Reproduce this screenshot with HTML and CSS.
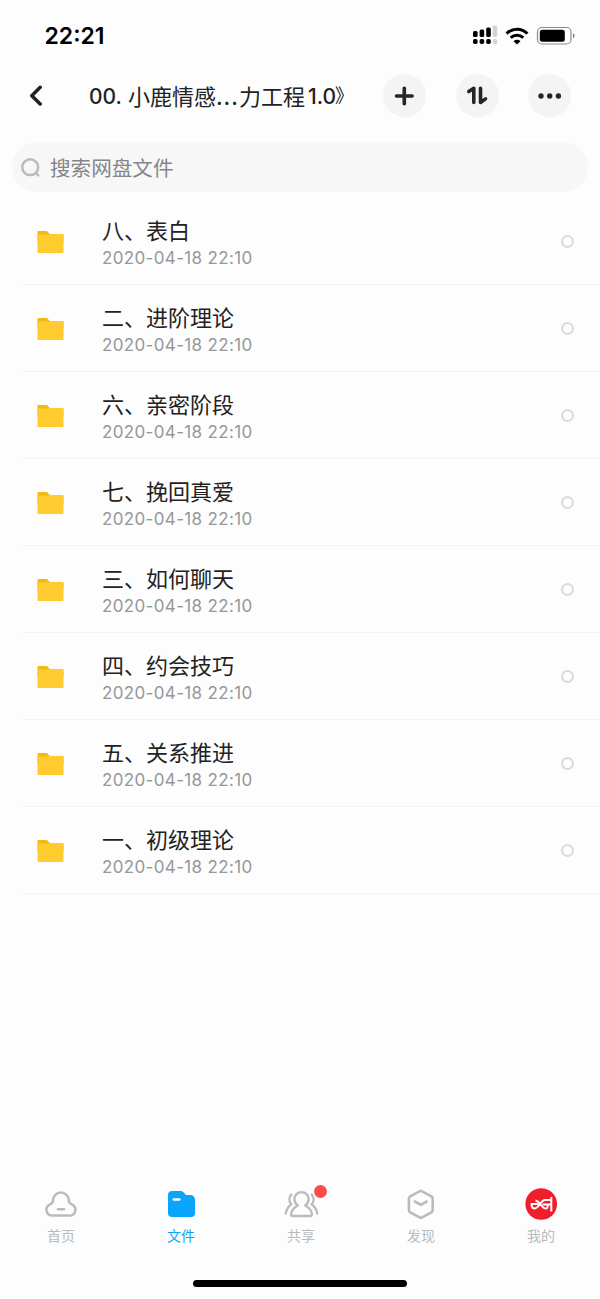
FILE: index.html
```html
<!DOCTYPE html>
<html lang="zh-CN">
<head>
<meta charset="utf-8">
<title>文件</title>
<link rel="stylesheet" href="styles.css">
</head>
<body>
<svg width="0" height="0" class="defs">
  <symbol id="folder" viewBox="0 0 27 24">
    <path d="M1.5 1H10l3 3.2h12.500a1 1 0 0 1 1 1V12H.5V2a1 1 0 0 1 1-1z" fill="#f3b911"/>
    <path d="M.5 4.600H11l1.300-.4h13.200a1 1 0 0 1 1 1V22.300a.8.8 0 0 1-.8.8H1.300a.8.8 0 0 1-.8-.8z" fill="#ffcb2e"/>
  </symbol>
</svg>
<div class="screen">
  <div class="status">
    <span class="clock">22:21</span>
    <svg class="status-icons" width="104" height="20" viewBox="472 26 104 20">
      <g fill="#000">
        <rect x="473" y="31" width="4.600" height="6" rx="1.500"/><rect x="479.600" y="29.500" width="4.600" height="7.500" rx="1.500"/><rect x="486.200" y="27.500" width="4.600" height="9.500" rx="1.500"/>
        <rect x="473" y="39" width="4.600" height="5" rx="1.800"/><rect x="479.600" y="39" width="4.600" height="5" rx="1.800"/><rect x="486.200" y="39" width="4.600" height="5" rx="1.800"/>
      </g>
      <g fill="#d3d3d3"><rect x="492.800" y="25.500" width="4.400" height="11.500" rx="1.500"/><rect x="492.800" y="39" width="4.400" height="5" rx="1.800"/></g>
      <g fill="none" stroke="#000" stroke-width="3">
        <path d="M506.600 33.600a14.800 14.800 0 0 1 20.800 0"/><path d="M510.700 37.700a9 9 0 0 1 12.600 0"/>
      </g>
      <path d="M513.500 41.200a5 5 0 0 1 7 0L517 44.400z" fill="#000"/>
      <rect x="537.500" y="27.500" width="33.500" height="16.500" rx="4.500" fill="#fff" stroke="#8a8a8a" stroke-width="1.200"/>
      <rect x="539.800" y="29.800" width="25" height="12" rx="2.500" fill="#000"/>
      <path d="M573 33.300a2.800 2.800 0 0 1 0 5z" fill="#777"/>
    </svg>
  </div>
  <header class="header">
    <svg class="back" width="16" height="22" viewBox="28 85 16 22"><path d="M40.200 87.300L31.800 95.700l8.400 8.300" fill="none" stroke="#222" stroke-width="3.500" stroke-linecap="round" stroke-linejoin="round"/></svg>
    <h1 class="title"><span class="num">00.</span><span class="cjk lead">小鹿情感</span><span class="dots">...</span><span class="cjk">力工程</span><span class="num version">1.0</span><span class="cjk close">》</span></h1>
    <div class="actions">
      <span class="round"><svg width="43" height="43" viewBox="383 74 43 43"><path d="M404.300 88.200v15.600M396.500 96h15.600" stroke="#262626" stroke-width="3.600" stroke-linecap="round"/></svg></span>
      <span class="round"><svg width="43" height="43" viewBox="456 74 43 43"><path d="M468.800 91.600l5-3.300V102.500M480.500 88.300V102.500l5-3.600" fill="none" stroke="#262626" stroke-width="3.600" stroke-linecap="round" stroke-linejoin="round"/></svg></span>
      <span class="round"><svg width="43" height="43" viewBox="528 74 43 43"><g fill="#262626"><circle cx="541" cy="96" r="2.700"/><circle cx="549.700" cy="96" r="2.700"/><circle cx="558.400" cy="96" r="2.700"/></g></svg></span>
    </div>
  </header>
  <div class="search">
    <svg width="20" height="20" viewBox="21 157 20 20"><g fill="none" stroke="#bbb" stroke-width="2.500" stroke-linecap="round"><circle cx="30.200" cy="167.200" r="7.900"/><path d="M36 173.200l2.300 2.200"/></g></svg>
    <span class="placeholder">搜索网盘文件</span>
  </div>
  <main class="list">
    <div class="row"><svg class="folder"><use href="#folder"/></svg><div class="info"><div class="name">八、表白</div><div class="date">2020-04-18 22:10</div></div><i class="check"></i></div>
    <div class="row"><svg class="folder"><use href="#folder"/></svg><div class="info"><div class="name">二、进阶理论</div><div class="date">2020-04-18 22:10</div></div><i class="check"></i></div>
    <div class="row"><svg class="folder"><use href="#folder"/></svg><div class="info"><div class="name">六、亲密阶段</div><div class="date">2020-04-18 22:10</div></div><i class="check"></i></div>
    <div class="row"><svg class="folder"><use href="#folder"/></svg><div class="info"><div class="name">七、挽回真爱</div><div class="date">2020-04-18 22:10</div></div><i class="check"></i></div>
    <div class="row"><svg class="folder"><use href="#folder"/></svg><div class="info"><div class="name">三、如何聊天</div><div class="date">2020-04-18 22:10</div></div><i class="check"></i></div>
    <div class="row"><svg class="folder"><use href="#folder"/></svg><div class="info"><div class="name">四、约会技巧</div><div class="date">2020-04-18 22:10</div></div><i class="check"></i></div>
    <div class="row"><svg class="folder"><use href="#folder"/></svg><div class="info"><div class="name">五、关系推进</div><div class="date">2020-04-18 22:10</div></div><i class="check"></i></div>
    <div class="row"><svg class="folder"><use href="#folder"/></svg><div class="info"><div class="name">一、初级理论</div><div class="date">2020-04-18 22:10</div></div><i class="check"></i></div>
  </main>
  <nav class="tabs">
    <div class="tab">
      <svg width="36" height="36" viewBox="43 1186 36 36"><g fill="none" stroke="#b9bbbe" stroke-width="2.500" stroke-linecap="round"><path d="M52.500 1215.600h17a5.900 5.900 0 0 0 2.300-11.300c-2-.8-3-1.500-3-3.800a7.900 7.900 0 0 0-15.800 0c0 2.300-1 3-3 3.800a5.900 5.900 0 0 0 2.500 11.300z"/><path d="M58 1209.300h6"/></g></svg>
      <span>首页</span>
    </div>
    <div class="tab active">
      <svg width="36" height="36" viewBox="163 1186 36 36"><path d="M172 1191h8.500c1.500 0 2.500.6 3.500 1.800l1.200 1.400c.6.700 1.200.9 2 .9h3.300a4.500 4.500 0 0 1 4.500 4.500V1213a4 4 0 0 1-4 4h-19a4 4 0 0 1-4-4v-18a4 4 0 0 1 4-4z" fill="#0aa4fb"/><path d="M173.800 1199.600h5.600" stroke="#fff" stroke-width="2.500" stroke-linecap="round"/></svg>
      <span>文件</span>
    </div>
    <div class="tab">
      <svg width="36" height="36" viewBox="283 1186 36 36"><g fill="none" stroke="#b9bbbe" stroke-width="2.300" stroke-linecap="round" stroke-linejoin="round"><path d="M297.800 1205.500c-2.300-1.800-3.400-3.700-3.400-6.300 0-4.200 3.100-7 7.100-7s7.100 2.800 7.100 7c0 2.600-1.100 4.500-3.400 6.300 3.700 1.800 6 4.500 6.700 8.500.2 1.300-.5 2-1.700 2h-17.400c-1.200 0-1.900-.7-1.700-2 .7-4 3-6.700 6.700-8.500z"/><path d="M291.300 1194.500c-2.600 3-2.600 7 .2 9.800-3.200 2-4.900 4.700-5.800 9.200M311.700 1194.500c2.600 3 2.600 7-.2 9.800 3.200 2 4.900 4.700 5.800 9.200"/></g></svg>
      <b class="badge"></b>
      <span>共享</span>
    </div>
    <div class="tab">
      <svg width="36" height="36" viewBox="403 1186 36 36"><g fill="none" stroke="#b9bbbe" stroke-width="2.600" stroke-linecap="round" stroke-linejoin="round"><path d="M419.500 1191.300a2.500 2.500 0 0 1 2.600 0l9.300 5.100q1.300.8 1.300 2.300v11.300q0 1.500-1.300 2.300l-9.300 5.100a2.500 2.500 0 0 1-2.600 0l-9.300-5.100q-1.300-.8-1.300-2.300v-11.300q0-1.500 1.300-2.300z"/><path d="M414.800 1201.500l6 3.300 6-3.300"/></g></svg>
      <span>发现</span>
    </div>
    <div class="tab">
      <svg width="36" height="36" viewBox="523 1186 36 36"><circle cx="541.200" cy="1204" r="15.800" fill="#f01d2d"/><g fill="none" stroke="#fff" stroke-width="2"><path d="M551.300 1197v14.500M530.700 1204h7.500M531.500 1204c0 3 1.200 4.500 3.200 4.500 4 0 5.500-7.500 10-8.500M535.500 1200.500c4.500.5 5.500 7.600 10 8 2 0 2.500-1.800 2-4.300M542.500 1204.500h8.500M544.500 1200h6.800"/></g></svg>
      <span>我的</span>
    </div>
  </nav>
  <div class="home"></div>
</div>
</body>
</html>
```

FILE: styles.css
```css
* { box-sizing: border-box; }
body { margin: 0; background: #fdfdfd; font-family: "Inter", "Noto Sans CJK SC", sans-serif; color: #222; }
svg { display: block; flex: none; }
.defs { position: absolute; }
.screen { width: 600px; height: 1299px; display: flex; flex-direction: column; overflow: hidden; }
.status { height: 72px; padding: 0 24px 0 44.5px; display: flex; align-items: center; justify-content: space-between; }
.clock { font-size: 23px; font-weight: 600; line-height: 28px; color: #000; }
.status-icons { overflow: visible; }
.header { height: 48px; padding: 0 29px 0 28px; display: flex; align-items: center; }
.title { margin: 1px 0 0 45px; width: 294px; height: 30px; display: flex; align-items: center; font-size: 22px; font-weight: 500; line-height: 30px; white-space: nowrap; }
.cjk { font-family: "Noto Sans CJK SC", sans-serif; font-weight: 400; padding-bottom: 4px; }
.num { font-size: 21px; }
.lead { margin-left: 6px; }
.dots { letter-spacing: 1px; }
.version { margin-left: 3px; }
.close { margin-left: -1px; font-size: 19px; }
.actions { display: flex; gap: 29.5px; }
.round { width: 43px; height: 43px; border-radius: 50%; background: #f4f4f4; }
.header .actions { margin-bottom: 1px; }
.search { margin: 22px 12px 0; height: 50px; border-radius: 25px; background: #f7f7f7; padding-left: 8.5px; display: flex; align-items: center; gap: 9.500px; }
.placeholder { font-family: "Noto Sans CJK SC", sans-serif; font-size: 20.600px; line-height: 30px; color: #85858a; }
.list { margin-top: 6px; padding-left: 22px; }
.row { height: 87px; border-bottom: 1px solid #f3f3f3; padding: 1px 26px 0 15px; display: flex; align-items: center; }
.folder { width: 27px; height: 24px; }
.info { flex: 1; margin: 2px 0 0 38px; }
.name { font-family: "Noto Sans CJK SC", sans-serif; font-size: 22px; line-height: 28px; padding-bottom: 3px; color: #222; }
.date { font-size: 17px; line-height: 25px; letter-spacing: 0.35px; color: #97979a; }
.check { width: 13px; height: 13px; border: 2px solid #dadada; border-radius: 50%; }
.tabs { margin-top: auto; height: 84px; padding-left: 1px; display: grid; grid-template-columns: repeat(5, 120px); }
.tab { position: relative; display: flex; flex-direction: column; align-items: center; padding-top: 1px; font-family: "Noto Sans CJK SC", sans-serif; font-size: 14px; line-height: 20px; color: #b9bbbe; }
.tab span { margin-top: 3px; }
.tab.active { color: #0aa4fb; }
.badge { position: absolute; left: 73px; top: 0; width: 13px; height: 13px; border-radius: 50%; background: #fb4b4b; }
.home { width: 214px; height: 7px; margin: 11px auto 12px; border-radius: 4px; background: #000; }
```
